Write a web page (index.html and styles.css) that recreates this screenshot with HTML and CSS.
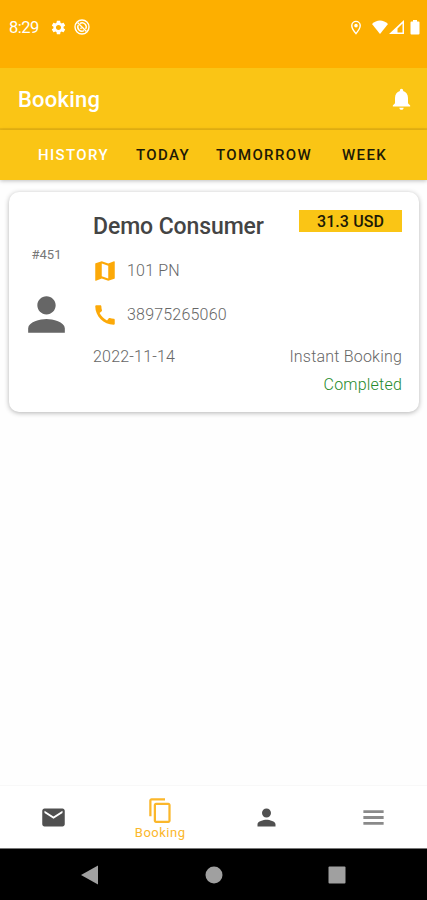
FILE: index.html
```html
<!doctype html>
<html lang="en">
<head>
<meta charset="UTF-8">
<meta name="viewport" content="width=device-width, initial-scale=1">
<title>Booking</title>
<link rel="stylesheet" href="styles.css">
</head>

<body>
<div class="statusBar">
    <span class="clock">8:29</span>
    <svg class="iconGear" viewBox="0 0 24 24"><path d="M19.14 12.94c.04-.3.06-.61.06-.94 0-.32-.02-.64-.07-.94l2.03-1.58c.18-.14.23-.41.12-.61l-1.92-3.32c-.12-.22-.37-.29-.59-.22l-2.39.96c-.5-.38-1.03-.7-1.62-.94l-.36-2.54c-.04-.24-.24-.41-.48-.41h-3.84c-.24 0-.43.17-.47.41l-.36 2.54c-.59.24-1.13.57-1.62.94l-2.39-.96c-.22-.08-.47 0-.59.22L2.74 8.87c-.12.21-.08.47.12.61l2.03 1.58c-.05.3-.09.63-.09.94s.02.64.07.94l-2.03 1.58c-.18.14-.23.41-.12.61l1.92 3.32c.12.22.37.29.59.22l2.39-.96c.5.38 1.03.7 1.62.94l.36 2.54c.05.24.24.41.48.41h3.84c.24 0 .44-.17.47-.41l.36-2.54c.59-.24 1.13-.56 1.62-.94l2.39.96c.22.08.47 0 .59-.22l1.92-3.32c.12-.22.07-.47-.12-.61l-2.01-1.58zM12 15.6c-1.98 0-3.6-1.62-3.6-3.6s1.62-3.6 3.6-3.6 3.6 1.62 3.6 3.6-1.62 3.6-3.6 3.6z"/></svg>
    <svg class="iconBlocked" viewBox="0 0 16 16"><g fill="none" stroke="#fff"><circle cx="8" cy="8" r="7" stroke-width="1.4"/><path d="M6 4.300A4.200 4.200 0 0 1 11.700 10M10 11.700A4.200 4.200 0 0 1 4.300 6" stroke-width="1.400"/><path d="M3.500 3.500l9 9M6.500 8.700l1 1" stroke-width="1.400"/></g></svg>
    <div class="statusRight">
        <svg class="iconPin" viewBox="0 0 12 16"><path d="M6 14.500C3.300 11.200 1.500 8.600 1.500 6a4.500 4.500 0 0 1 9 0c0 2.600-1.800 5.200-4.500 8.500z" fill="none" stroke="#fff" stroke-width="1.500"/><circle cx="6" cy="6" r="1.900"/></svg>
        <svg class="iconWifi" viewBox="0 0 16 14"><path d="M8 14L0 4C4.500-.8 11.500-.8 16 4z"/></svg>
        <svg class="iconSignal" viewBox="0 0 15 14"><path fill-rule="evenodd" d="M15 0v14H0zM13.500 3.600L8.500 8.500v4h5z"/></svg>
        <svg class="iconBattery" viewBox="0 0 10 15"><path d="M3 0h4v1.500h1.500Q9.500 1.500 9.500 2.500v11Q9.500 14.500 8.500 14.500h-7Q.5 14.500 .5 13.500v-11Q.5 1.500 1.500 1.500H3z"/></svg>
    </div>
</div>

<header class="appBar">
    <h1>Booking</h1>
    <svg class="iconBell" viewBox="0 0 24 24"><path d="M12 22c1.100 0 2-.9 2-2h-4c0 1.100.89 2 2 2zm6-6v-5c0-3.070-1.640-5.640-4.500-6.320V4c0-.83-.67-1.500-1.500-1.500s-1.500.67-1.500 1.500v.68C7.630 5.360 6 7.920 6 11v5l-2 2v1h16v-1l-2-2z"/></svg>
</header>

<nav class="tabs">
    <span class="tab tabHistory active">HISTORY</span>
    <span class="tab tabToday">TODAY</span>
    <span class="tab tabTomorrow">TOMORROW</span>
    <span class="tab tabWeek">WEEK</span>
</nav>

<main>
    <article class="card">
        <div class="cardSide">
            <span class="bookingId">#451</span>
            <svg class="avatar" viewBox="0 0 24 24"><path d="M12 12c2.210 0 4-1.790 4-4s-1.790-4-4-4-4 1.790-4 4 1.790 4 4 4zm0 2c-2.670 0-8 1.340-8 4v2h16v-2c0-2.660-5.330-4-8-4z"/></svg>
        </div>
        <div class="cardMain">
            <div class="cardHead">
                <h2>Demo Consumer</h2>
                <span class="price">31.3 USD</span>
            </div>
            <div class="row">
                <svg viewBox="0 0 24 24"><path d="M20.500 3l-.16.03L15 5.100 9 3 3.360 4.900c-.21.07-.36.25-.36.48V20.500c0 .28.22.5.5.5l.16-.03L9 18.900l6 2.100 5.640-1.900c.21-.07.36-.25.36-.48V3.500c0-.28-.22-.5-.5-.5zM15 19l-6-2.110V5l6 2.110V19z"/></svg>
                <span>101 PN</span>
            </div>
            <div class="row">
                <svg viewBox="0 0 24 24"><path d="M20.010 15.380c-1.230 0-2.420-.2-3.530-.56-.35-.12-.74-.03-1.010.24l-1.570 1.970c-2.830-1.350-5.480-3.900-6.890-6.830l1.950-1.660c.27-.28.35-.67.24-1.020-.37-1.110-.56-2.300-.56-3.530 0-.54-.45-.99-.99-.99H4.190C3.650 3 3 3.240 3 3.990 3 13.280 10.730 21 20.010 21c.71 0 .99-.63.99-1.180v-3.450c0-.54-.45-.99-.99-.99z"/></svg>
                <span>38975265060</span>
            </div>
            <div class="cardFoot">
                <span>2022-11-14</span>
                <span>Instant Booking</span>
            </div>
            <div class="state">Completed</div>
        </div>
    </article>
</main>

<nav class="bottomNav">
    <span class="navItem"><svg viewBox="0 0 24 24"><path d="M20 4H4c-1.100 0-1.990.9-1.990 2L2 18c0 1.100.9 2 2 2h16c1.100 0 2-.9 2-2V6c0-1.100-.9-2-2-2zm0 4l-8 5-8-5V6l8 5 8-5v2z"/></svg></span>
    <span class="navItem active"><svg viewBox="0 0 24 24"><path d="M16 1H4c-1.100 0-2 .9-2 2v14h2V3h12V1zm3 4H8c-1.100 0-2 .9-2 2v14c0 1.100.9 2 2 2h11c1.100 0 2-.9 2-2V7c0-1.100-.9-2-2-2zm0 16H8V7h11v14z"/></svg><span>Booking</span></span>
    <span class="navItem"><svg viewBox="0 0 24 24"><path d="M12 12c2.210 0 4-1.790 4-4s-1.790-4-4-4-4 1.790-4 4 1.790 4 4 4zm0 2c-2.670 0-8 1.340-8 4v2h16v-2c0-2.660-5.330-4-8-4z"/></svg></span>
    <span class="navItem menu"><svg viewBox="0 0 24 24"><path d="M3 18.500h18v-2.500H3zm0-5.250h18v-2.500H3zM3 5.500v2.500h18V5.500z"/></svg></span>
</nav>

<div class="systemNav">
    <svg viewBox="0 0 20 20"><path d="M18 .5v19L1 10z"/></svg>
    <svg viewBox="0 0 20 20"><circle cx="10" cy="10" r="8.500"/></svg>
    <svg viewBox="0 0 20 20"><rect x="1.500" y="1.500" width="17" height="17" rx="1"/></svg>
</div>
</body>
</html>
```

FILE: styles.css
```css
*,
*:after,
*:before {
    box-sizing: border-box;
}
body {
    background: #fefefe;
    color: #666;
    display: flex;
    flex-direction: column;
    font-family: Roboto, "Liberation Sans", sans-serif;
    height: 900px;
    margin: 0;
    overflow: hidden;
}
h1,
h2 {
    font-weight: 500;
    margin: 0;
}
svg {
    display: block;
    fill: currentColor;
    flex: none;
}
.statusBar {
    align-items: center;
    background: #fdaf00;
    color: #fff;
    display: flex;
    height: 68px;
    padding: 0 7px 14px 9px;
}
.clock {
    font-size: 16.5px;
    letter-spacing: -0.5px;
    padding-top: 1px;
    width: 41px;
}
.iconGear {
    height: 17px;
    width: 17px;
}
.iconBlocked {
    height: 16px;
    margin-left: 7px;
    width: 16px;
}
.statusRight {
    align-items: center;
    display: flex;
    margin-left: auto;
}
.iconPin {
    height: 15px;
    margin-right: 10px;
    width: 12px;
}
.iconWifi {
    height: 14px;
    margin-right: 1px;
    width: 16px;
}
.iconSignal {
    height: 14px;
    margin-right: 6px;
    width: 15px;
}
.iconBattery {
    height: 15px;
    width: 10px;
}
.appBar {
    align-items: center;
    background: #fac515;
    border-bottom: 2px solid #ebb713;
    color: #fff;
    display: flex;
    height: 62px;
    justify-content: space-between;
    padding: 2px 12px 0 18px;
}
.appBar h1 {
    font-size: 22px;
    letter-spacing: 0.2px;
}
.iconBell {
    height: 26px;
    width: 27px;
}
.tabs {
    align-items: center;
    background: #fac515;
    box-shadow: 0 1px 4px rgba(0, 0, 0, 0.25);
    color: #1d1a06;
    display: flex;
    font-size: 15px;
    font-weight: 500;
    height: 50px;
    letter-spacing: 1.35px;
    padding-left: 38px;
}
.tab.active {
    color: #fff;
}
.tabHistory {
    width: 98px;
}
.tabToday {
    width: 80px;
}
.tabTomorrow {
    width: 126px;
}
main {
    flex: 1;
    padding: 12px 8px 0 9px;
}
.card {
    background: #fff;
    border-radius: 10px;
    box-shadow: 0 1px 5px rgba(0, 0, 0, 0.3);
    display: flex;
    height: 220px;
    padding: 18px 17px 0 0;
}
.cardSide {
    align-items: center;
    display: flex;
    flex-direction: column;
    padding: 37px 9px 0 0;
    width: 84px;
}
.bookingId {
    color: #777;
    font-size: 13px;
    line-height: 16px;
}
.avatar {
    height: 55px;
    margin-top: 24px;
    width: 55px;
}
.cardMain {
    flex: 1;
    font-size: 16px;
    font-weight: 300;
    letter-spacing: 0.2px;
}
.cardHead {
    align-items: flex-start;
    display: flex;
    height: 39px;
    justify-content: space-between;
}
.cardHead h2 {
    color: #444;
    font-size: 23px;
    letter-spacing: -0.1px;
    line-height: 34px;
}
.price {
    background: #fac515;
    color: #1d1a06;
    font-weight: 500;
    height: 22px;
    letter-spacing: 0.1px;
    line-height: 24px;
    text-align: center;
    width: 103px;
}
.row {
    align-items: center;
    display: flex;
    height: 43.5px;
}
.row svg {
    color: #fca908;
    height: 26px;
    margin: 1px 9px 0 -1px;
    width: 26px;
}
.cardFoot {
    display: flex;
    justify-content: space-between;
    line-height: 42px;
}
.state {
    color: #258a2b;
    line-height: 14px;
    text-align: right;
}
.bottomNav {
    background: #fff;
    border-top: 1px solid #f8f8f8;
    color: #505050;
    display: flex;
    height: 63px;
    padding-top: 1px;
}
.navItem {
    align-items: center;
    display: flex;
    flex: 1;
    flex-direction: column;
    font-size: 13px;
    justify-content: center;
    letter-spacing: 0.5px;
    line-height: 13px;
}
.navItem svg {
    height: 27px;
    width: 27px;
}
.navItem.active {
    color: #fbb72b;
}
.navItem.active span {
    margin-top: 2px;
}
.navItem.menu {
    color: #8a8a8a;
}
.systemNav {
    align-items: center;
    background: #000;
    border-top: 1px solid #777;
    color: #a0a0a0;
    display: flex;
    height: 52px;
    justify-content: space-between;
    padding: 0 80px;
}
.systemNav svg {
    height: 20px;
    width: 20px;
}
```
